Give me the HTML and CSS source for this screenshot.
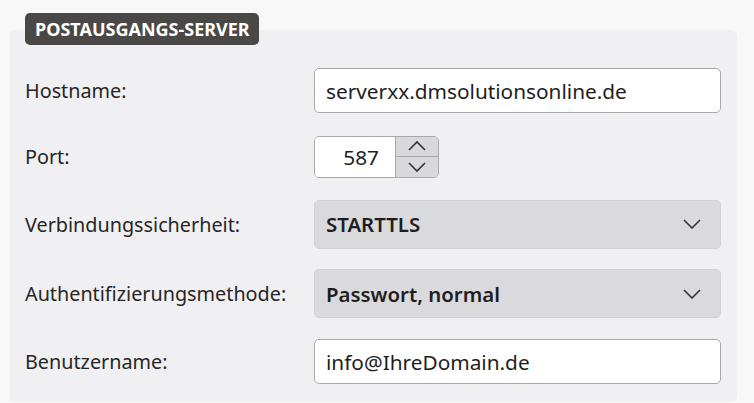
FILE: index.html
```html
<!DOCTYPE html>
<html lang="de">
<head>
  <meta charset="UTF-8">
  <title>Postausgangs-Server</title>
  <link rel="stylesheet" href="styles.css">
</head>
<body>
  <div class="group">
    <div class="badge">POSTAUSGANGS-SERVER</div>
    <div class="panel">
      <div class="row">
        <label>Hostname:</label>
        <div class="field text">serverxx.dmsolutionsonline.de</div>
      </div>
      <div class="row">
        <label>Port:</label>
        <div class="spinner">
          <div class="num">587</div>
          <div class="arrows">
            <div class="arrow">
              <svg width="20" height="12" viewBox="0 0 20 12"><path d="M2 10 L10 2 L18 10" fill="none" stroke="#333" stroke-width="1.6"/></svg>
            </div>
            <div class="arrow">
              <svg width="20" height="12" viewBox="0 0 20 12"><path d="M2 2 L10 10 L18 2" fill="none" stroke="#333" stroke-width="1.6"/></svg>
            </div>
          </div>
        </div>
      </div>
      <div class="row">
        <label>Verbindungssicherheit:</label>
        <div class="field select">
          <span>STARTTLS</span>
          <svg width="18" height="10" viewBox="0 0 18 10"><path d="M1 1 L9 9 L17 1" fill="none" stroke="#333" stroke-width="1.6"/></svg>
        </div>
      </div>
      <div class="row">
        <label>Authentifizierungsmethode:</label>
        <div class="field select">
          <span>Passwort, normal</span>
          <svg width="18" height="10" viewBox="0 0 18 10"><path d="M1 1 L9 9 L17 1" fill="none" stroke="#333" stroke-width="1.6"/></svg>
        </div>
      </div>
      <div class="row">
        <label>Benutzername:</label>
        <div class="field text">info@IhreDomain.de</div>
      </div>
    </div>
  </div>
</body>
</html>
```

FILE: styles.css
```css
body {
  margin: 0;
  background: #f8f8f9;
  font-family: "Noto Sans", "Open Sans", sans-serif;
  color: #1e1e1e;
}
.group {
  position: relative;
  padding: 30px 17px 0 10px;
}
.badge {
  position: absolute;
  left: 25px;
  top: 13px;
  height: 32px;
  padding: 0 9px 0 10px;
  background: #4a4846;
  color: #fff;
  border-radius: 5px;
  font-size: 18px;
  font-weight: 700;
  line-height: 32px;
}
.panel {
  background: #f0f0f2;
  border-radius: 6px;
  padding: 38px 16px 18px 15px;
  height: 316px;
  display: flex;
  flex-direction: column;
  gap: 21px;
}
.row {
  display: flex;
  align-items: center;
  min-height: 45px;
}
.row label {
  width: 289px;
  font-size: 19.8px;
  color: #262626;
}
.field {
  width: 407px;
  height: 45px;
  box-sizing: border-box;
  border-radius: 5px;
  font-size: 20.8px;
  display: flex;
  align-items: center;
  padding: 0 11px;
}
.text {
  background: #fff;
  border: 1px solid #a9a9ab;
}
.select {
  height: 49px;
  background: #dadadc;
  border: 1px solid #d2d2d4;
  justify-content: space-between;
  font-weight: 600;
  font-size: 20.4px;
  padding-right: 19px;
}
.spinner {
  display: flex;
  height: 42px;
  width: 125px;
  box-sizing: border-box;
  border: 1px solid #a9a9ab;
  border-radius: 5px;
  overflow: hidden;
}
.num {
  width: 80px;
  background: #fff;
  font-size: 20.8px;
  display: flex;
  align-items: center;
  justify-content: flex-end;
  padding-right: 16px;
  box-sizing: border-box;
}
.arrows {
  flex: 1;
  display: flex;
  flex-direction: column;
  border-left: 1px solid #a9a9ab;
}
.arrow {
  flex: 1;
  background: #d9d9db;
  display: flex;
  align-items: center;
  justify-content: center;
}
.arrow + .arrow {
  border-top: 1px solid #a9a9ab;
}
```
